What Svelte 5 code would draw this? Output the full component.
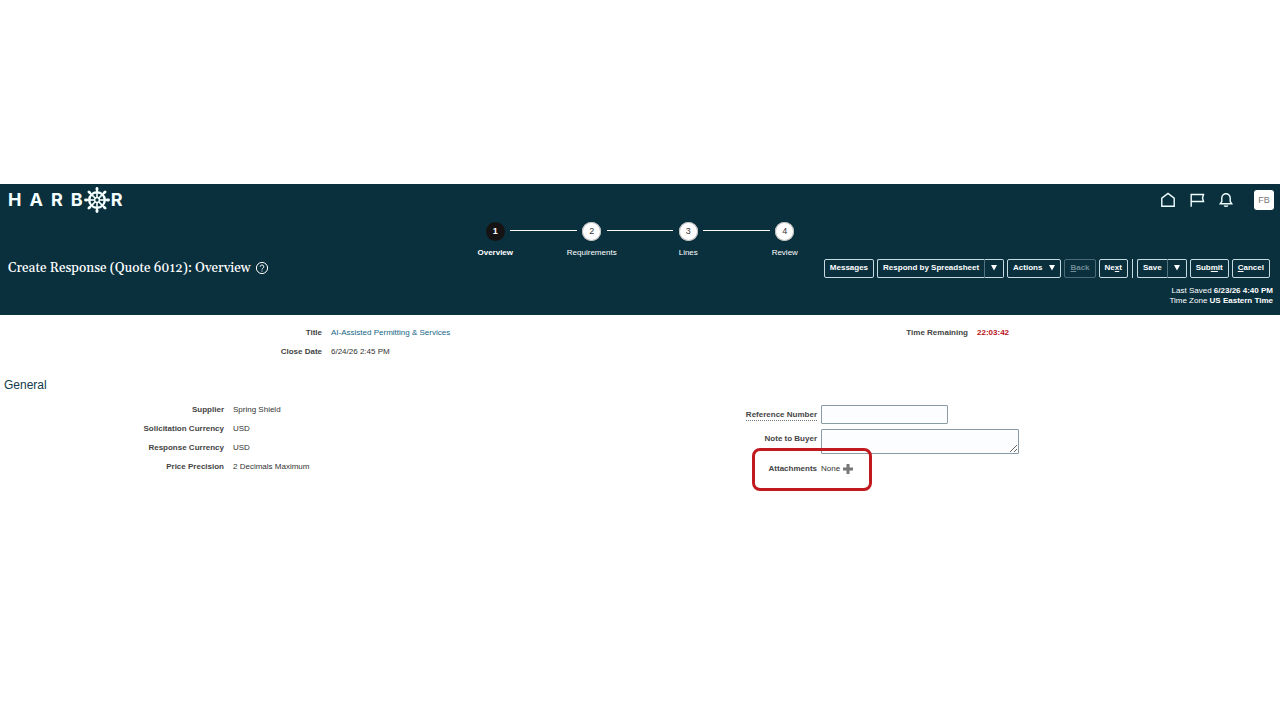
<script>
  const steps = ['Overview', 'Requirements', 'Lines', 'Review'];
  const general = [
    ['Supplier', 'Spring Shield'],
    ['Solicitation Currency', 'USD'],
    ['Response Currency', 'USD'],
    ['Price Precision', '2 Decimals Maximum']
  ];
  const spokes = [0, 45, 90, 135, 180, 225, 270, 315];
</script>

{#snippet arrow()}
  <svg class="arrow" viewBox="0 0 6 6" aria-hidden="true"><path d="M0 0h6L3 5.5z" fill="currentColor" /></svg>
{/snippet}

<div class="page">
  <header>
    <div class="brandbar">
      <div class="logo" role="img" aria-label="Harbor">
        <span>H</span><span>A</span><span>R</span><span>B</span>
        <svg class="wheel" viewBox="-13 -13 26 26" fill="none" stroke="currentColor" aria-hidden="true">
          <circle r="7.8" stroke-width="2.4" />
          <circle r="2.4" stroke-width="1.500" />
          {#each spokes as a}
            <g transform="rotate({a})">
              <path d="M0 -2.6V-12" stroke-width="1.600" />
              <path d="M0 -10.200V-11.500" stroke-width="2.800" stroke-linecap="round" />
            </g>
          {/each}
        </svg>
        <span>R</span>
      </div>
      <nav class="tools" aria-label="Global">
        <button aria-label="Home"><svg viewBox="0 0 16 16"><path d="M1.8 14.2V6.2L8 1.5l6.200 4.700v8z" /></svg></button>
        <button aria-label="Watchlist"><svg viewBox="0 0 16 16"><path d="M2.200 14.800V2.500h12.300l-1 3.500 1 3.500H2.200" /></svg></button>
        <button aria-label="Notifications"><svg viewBox="0 0 16 16"><path d="M2.300 11.700h11.400L12.200 9.500V6a4.200 4.200 0 0 0-8.400 0v3.500zM6.200 13.500a1.900 1.200 0 0 0 3.600 0" /></svg></button>
        <button class="avatar" aria-label="Account FB">FB</button>
      </nav>
    </div>

    <ol class="train">
      {#each steps as step, i}
        <li class:current={i === 0}>
          <span class="dot">{i + 1}</span>
          <span class="name">{step}</span>
        </li>
      {/each}
    </ol>

    <div class="titlebar">
      <h1>
        Create Response (Quote 6012): Overview
        <button class="help" aria-label="Help">
          <svg viewBox="0 0 14 14" fill="none" stroke="currentColor"><circle cx="7" cy="7" r="5.600" /><path d="M5.200 5.700a1.800 1.700 0 1 1 2.600 1.500q-.8.400-.8 1.300M7 9.500v1.100" /></svg>
        </button>
      </h1>
      <div class="actions">
        <button class="btn">Messages</button>
        <span class="split">
          <button class="btn">Respond by Spreadsheet</button>
          <button class="btn drop" aria-label="Respond options">{@render arrow()}</button>
        </span>
        <button class="btn">Actions {@render arrow()}</button>
        <button class="btn" disabled><span><u>B</u>ack</span></button>
        <button class="btn"><span>Ne<u>x</u>t</span></button>
        <span class="bar"></span>
        <span class="split">
          <button class="btn">Save</button>
          <button class="btn drop" aria-label="Save options">{@render arrow()}</button>
        </span>
        <button class="btn"><span>Sub<u>m</u>it</span></button>
        <button class="btn"><span><u>C</u>ancel</span></button>
      </div>
    </div>

    <p class="saved">
      Last Saved <b>6/23/26 4:40 PM</b><br />
      Time Zone <b>US Eastern Time</b>
    </p>
  </header>

  <main>
    <section class="columns summary">
      <dl>
        <dt>Title</dt>
        <dd><a href="#title">AI-Assisted Permitting &amp; Services</a></dd>
        <dt>Close Date</dt>
        <dd>6/24/26 2:45 PM</dd>
      </dl>
      <dl class="remaining">
        <dt>Time Remaining</dt>
        <dd class="time">22:03:42</dd>
      </dl>
    </section>

    <h2>General</h2>
    <section class="columns">
      <dl class="facts">
        {#each general as [label, value]}
          <dt>{label}</dt>
          <dd>{value}</dd>
        {/each}
      </dl>
      <form>
        <label for="ref"><span class="hint">Reference Number</span></label>
        <input id="ref" type="text" />
        <label for="note">Note to Buyer</label>
        <textarea id="note"></textarea>
        <span class="label">Attachments</span>
        <span class="attach">
          None
          <button type="button" class="add" aria-label="Add attachment">
            <svg viewBox="0 0 10 10"><path d="M3.500 0h3v3.500H10v3H6.500V10h-3V6.500H0v-3h3.500z" fill="#777" /></svg>
          </button>
          <span class="callout"></span>
        </span>
      </form>
    </section>
  </main>
</div>

<style>
  :global(body) { background: #fff; }
  .page {
    padding-top: 184px;
    font: 8px/10px "Liberation Sans", Arial, sans-serif;
    color: #333;
  }
  button { font: inherit; color: inherit; background: none; border: 0; padding: 0; cursor: pointer; }
  svg { display: block; }
  header { background: #0a303e; color: #fff; padding-bottom: 9px; }

  .brandbar { display: flex; justify-content: space-between; align-items: center; height: 32px; padding: 0 6px 0 8px; }
  .logo { display: flex; align-items: center; gap: 8px; font: 700 18px/24px Inter, sans-serif; color: #f4ffff; }
  .wheel { width: 26px; height: 26px; margin: 0 -7px; }
  .tools { display: flex; align-items: center; gap: 13px; }
  .tools svg { width: 16px; height: 16px; fill: none; stroke: #f0ffff; stroke-width: 1.4; }
  .tools .avatar { width: 20px; height: 20px; margin-left: 7px; border-radius: 3px; background: #fff; color: #777; font-size: 9px; }

  .train { list-style: none; display: grid; grid-template-columns: repeat(4, 1fr); max-width: 386px; margin: 6px auto 0; padding: 0; }
  .train li { position: relative; display: flex; flex-direction: column; align-items: center; gap: 7px; }
  .train li + li::before { content: ""; position: absolute; top: 8px; right: calc(50% + 15px); left: calc(-50% + 15px); height: 1px; background: #fff; }
  .dot { width: 19px; height: 19px; border-radius: 50%; background: #fff; color: #333; font-size: 9px; line-height: 19px; text-align: center; box-shadow: inset 0 0 0 1px #bbb; }
  .current .dot { background: #161314; color: #fff; box-shadow: none; }
  .current { font-weight: 700; }

  .titlebar { display: flex; justify-content: space-between; align-items: center; padding: 0 10px 0 8px; }
  h1 { display: flex; align-items: center; gap: 4px; margin: 0; font: 500 13px/20px Georgia, Gelasio, "Liberation Serif", serif; }
  .help svg { width: 14px; height: 14px; }
  .actions { display: flex; align-items: center; gap: 3px; }
  .btn { display: flex; align-items: center; gap: 7px; height: 19px; padding: 0 5px; border: 1px solid #c5dbe1; border-radius: 2px; font-weight: 700; white-space: nowrap; }
  .btn:disabled { color: #6e8a94; border-color: #4c6b76; }
  .split { display: flex; }
  .split .btn:first-child { border-right: 0; border-radius: 2px 0 0 2px; }
  .split .drop { padding: 0 6px; border-left-color: #55737e; border-radius: 0 2px 2px 0; }
  .arrow { width: 6px; height: 6px; }
  .bar { width: 1px; height: 19px; margin: 0 1px; background: #c5dbe1; }
  .saved { margin: 8px 7px 0; text-align: right; line-height: 10px; }

  main { padding: 8px 0 24px; }
  .columns { display: grid; grid-template-columns: 1fr 1fr; align-items: start; }
  dl { display: grid; grid-template-columns: 322px 1fr; column-gap: 9px; margin: 0; line-height: 19px; }
  dt, label, .label { text-align: right; font-weight: 700; color: #444; }
  dd { margin: 0; }
  a { color: #146685; text-decoration: none; }
  .remaining { grid-template-columns: 328px 1fr; }
  .time { color: #b8121b; font-weight: 700; }
  h2 { margin: 15px 4px 6px; font: 400 12px/18px "Liberation Sans", Arial, sans-serif; color: #123b4b; }
  .facts { grid-template-columns: 224px 1fr; }

  form { display: grid; grid-template-columns: 177px 1fr; column-gap: 4px; row-gap: 5px; padding-top: 5px; line-height: 19px; }
  input, textarea { box-sizing: border-box; display: block; margin: 0; border: 1px solid #8b9ba5; border-radius: 1px; background: #fcfdfe; font: inherit; }
  input { width: 127px; height: 19px; }
  textarea { width: 198px; height: 25px; resize: both; }
  .hint { display: inline-block; line-height: 11px; border-bottom: 1px dotted #777; }
  .attach { position: relative; display: flex; align-items: center; gap: 3px; justify-self: start; }
  .add svg { width: 10px; height: 10px; }
  .callout { position: absolute; top: -11px; right: -19px; width: 120px; height: 43px; box-sizing: border-box; border: 3px solid #c01a20; border-radius: 8px; pointer-events: none; }
</style>
